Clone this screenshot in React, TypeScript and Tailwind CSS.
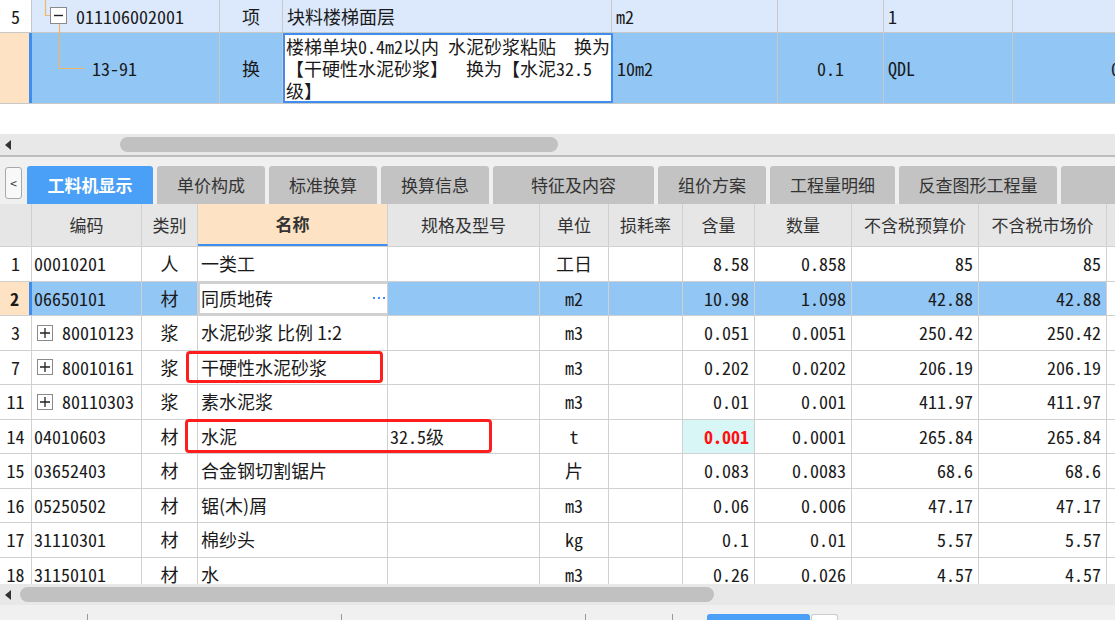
import React from "react";

const mono = "font-['Noto_Sans_Mono_CJK_SC','Noto_Sans_CJK_SC',monospace]";
const sans = "font-['Noto_Sans_CJK_SC','Noto_Sans',sans-serif]";

type Item = {
  no: string;
  code: string;
  plus?: boolean;
  kind: string;
  name: string;
  spec: string;
  unit: string;
  qty: string;
  amount: string;
  budget: string;
  market: string;
};

const rows: Item[] = [
  { no: "1", code: "00010201", kind: "人", name: "一类工", spec: "", unit: "工日", qty: "8.58", amount: "0.858", budget: "85", market: "85" },
  { no: "2", code: "06650101", kind: "材", name: "同质地砖", spec: "", unit: "m2", qty: "10.98", amount: "1.098", budget: "42.88", market: "42.88" },
  { no: "3", code: "80010123", plus: true, kind: "浆", name: "水泥砂浆 比例 1:2", spec: "", unit: "m3", qty: "0.051", amount: "0.0051", budget: "250.42", market: "250.42" },
  { no: "7", code: "80010161", plus: true, kind: "浆", name: "干硬性水泥砂浆", spec: "", unit: "m3", qty: "0.202", amount: "0.0202", budget: "206.19", market: "206.19" },
  { no: "11", code: "80110303", plus: true, kind: "浆", name: "素水泥浆", spec: "", unit: "m3", qty: "0.01", amount: "0.001", budget: "411.97", market: "411.97" },
  { no: "14", code: "04010603", kind: "材", name: "水泥", spec: "32.5级", unit: "t", qty: "0.001", amount: "0.0001", budget: "265.84", market: "265.84" },
  { no: "15", code: "03652403", kind: "材", name: "合金钢切割锯片", spec: "", unit: "片", qty: "0.083", amount: "0.0083", budget: "68.6", market: "68.6" },
  { no: "16", code: "05250502", kind: "材", name: "锯(木)屑", spec: "", unit: "m3", qty: "0.06", amount: "0.006", budget: "47.17", market: "47.17" },
  { no: "17", code: "31110301", kind: "材", name: "棉纱头", spec: "", unit: "kg", qty: "0.1", amount: "0.01", budget: "5.57", market: "5.57" },
  { no: "18", code: "31150101", kind: "材", name: "水", spec: "", unit: "m3", qty: "0.26", amount: "0.026", budget: "4.57", market: "4.57" },
];

const tabs = [
  { label: "工料机显示", w: "w-[126px]", active: true },
  { label: "单价构成", w: "w-[108px]" },
  { label: "标准换算", w: "w-[108px]" },
  { label: "换算信息", w: "w-[108px]" },
  { label: "特征及内容", w: "w-[161px]" },
  { label: "组价方案", w: "w-[108px]" },
  { label: "工程量明细", w: "w-[125px]" },
  { label: "反查图形工程量", w: "w-[158px]" },
  { label: "", w: "w-[60px]" },
];

const line = "border-[#d0d0d0]";

function TopGrid() {
  return (
    <div className={`relative h-[104px] ${mono} text-[18px] text-[#1a1a1a]`}>
      <div className="flex h-[33px] bg-[#dce9fc] border-b border-[#c8c8c8]">
        <div className="w-[32px] shrink-0 bg-white border-r border-[#c8c8c8] flex items-center justify-center">5</div>
        <div className="w-[188px] shrink-0 border-r border-[#c8c8c8] flex items-center pl-[44px]">011106002001</div>
        <div className={`w-[63px] shrink-0 border-r border-[#c8c8c8] flex items-center justify-center ${sans}`}>项</div>
        <div className={`w-[329px] shrink-0 border-r border-[#c8c8c8] flex items-center pl-[4px] ${sans}`}>块料楼梯面层</div>
        <div className="w-[166px] shrink-0 border-r border-[#c8c8c8] flex items-center pl-[4px]">m2</div>
        <div className="w-[106px] shrink-0 border-r border-[#c8c8c8]"></div>
        <div className="w-[129px] shrink-0 border-r border-[#c8c8c8] flex items-center pl-[4px]">1</div>
        <div className="flex-1"></div>
      </div>
      <div className="flex h-[71px] bg-[#92c6f5] border-b border-[#c8c8c8]">
        <div className="w-[32px] shrink-0 bg-[#fde3c3] border-r-[3px] border-[#3d8ef0]"></div>
        <div className="w-[188px] shrink-0 border-r border-[#c8c8c8] flex items-center pl-[60px]">13-91</div>
        <div className="w-[63px] shrink-0 border-r border-[#c8c8c8] flex items-center justify-center">换</div>
        <div className="w-[330px] shrink-0 bg-white border-2 border-[#3d8ef0] px-[1px] leading-[22px] whitespace-pre overflow-hidden">
          {"楼梯单块0.4m2以内 水泥砂浆粘贴  换为\n【干硬性水泥砂浆】  换为【水泥32.5\n级】"}
        </div>
        <div className="w-[165px] shrink-0 border-r border-[#c8c8c8] flex items-center pl-[4px]">10m2</div>
        <div className="w-[106px] shrink-0 border-r border-[#c8c8c8] flex items-center justify-center">0.1</div>
        <div className="w-[129px] shrink-0 border-r border-[#c8c8c8] flex items-center pl-[4px]">QDL</div>
        <div className="flex-1 flex items-center pl-[98px] overflow-hidden">0</div>
      </div>
      <svg className="absolute left-0 top-0" width="100" height="104">
        <path d="M45.5 0 V15.5 H50" stroke="#eeb868" strokeWidth="1.2" fill="none" />
        <path d="M59.5 24 V68.5 H84" stroke="#eeb868" strokeWidth="1.2" fill="none" />
        <rect x="50.5" y="7.5" width="16" height="16" fill="#fff" stroke="#8a8a8a" />
        <path d="M54 15.5 H63" stroke="#222" strokeWidth="1.4" />
      </svg>
    </div>
  );
}

function HScroll({ thumb }: { thumb: string }) {
  return (
    <div className="relative h-[21px] bg-[#e8e8e8] flex items-center">
      <svg className="absolute left-[5px]" width="6" height="10">
        <path d="M6 0 V10 L0 5 Z" fill="#333" />
      </svg>
      <div className={`h-[15px] rounded-full bg-[#c1c1c1] ${thumb}`}></div>
    </div>
  );
}

function Tabs() {
  return (
    <div className={`h-[49px] bg-[#f0f0f0] border-t-2 border-[#bdbdbd] flex items-end ${sans}`}>
      <div className="self-start mt-[10px] ml-[5px] w-[17px] h-[32px] rounded-[3px] border border-[#a8a8a8] bg-[#f8f8f8] flex items-center justify-center text-[12px] text-[#333]">&lt;</div>
      <div className="flex gap-[4px] ml-[5px] h-[38px] overflow-hidden">
        {tabs.map((t, i) => (
          <div
            key={i}
            className={`${t.w} shrink-0 rounded-t-[3px] flex items-center justify-center text-[17px] ${t.active ? "bg-[#4aa0f6] text-white font-bold" : "bg-[#c3c3c3] text-[#333]"}`}
          >
            {t.label}
          </div>
        ))}
      </div>
    </div>
  );
}

function Header() {
  const h = `border-r ${line} flex items-center justify-center shrink-0`;
  return (
    <div className={`flex h-[43px] bg-[#e6e6e6] border-b ${line} ${sans} text-[17px] text-[#333]`}>
      <div className={`${h} w-[32px]`}></div>
      <div className={`${h} w-[110px]`}>编码</div>
      <div className={`${h} w-[56px]`}>类别</div>
      <div className={`${h} w-[190px] bg-[#fde3c3] font-bold border-b-2 border-b-[#3d8ef0]`}>名称</div>
      <div className={`${h} w-[152px]`}>规格及型号</div>
      <div className={`${h} w-[69px]`}>单位</div>
      <div className={`${h} w-[74px]`}>损耗率</div>
      <div className={`${h} w-[72px]`}>含量</div>
      <div className={`${h} w-[97px]`}>数量</div>
      <div className={`${h} w-[127px]`}>不含税预算价</div>
      <div className={`${h} w-[128px]`}>不含税市场价</div>
      <div className="flex-1"></div>
    </div>
  );
}

function Row({ r }: { r: Item }) {
  const sel = r.no === "2";
  const red = r.no === "14";
  const c = `border-r ${line} flex items-center shrink-0`;
  return (
    <div className={`flex h-[34.5px] border-b ${line} ${sel ? "bg-[#92c6f5]" : "bg-white"}`}>
      <div className={`w-[32px] shrink-0 flex items-center justify-center ${sel ? "bg-[#fde3c3] font-bold border-r-[3px] border-[#3d8ef0]" : `border-r ${line}`}`}>{r.no}</div>
      <div className={`${c} w-[110px] pl-[2px]`}>
        {r.plus && (
          <span className="shrink-0 w-[16px] h-[16px] ml-[3px] mr-[9px] border border-[#8a8a8a] flex items-center justify-center">
            <svg width="10" height="10">
              <path d="M0 5 H10 M5 0 V10" stroke="#222" strokeWidth="1.3" />
            </svg>
          </span>
        )}
        {r.code}
      </div>
      <div className={`${c} w-[56px] justify-center ${sans}`}>{r.kind}</div>
      <div className={`${c} w-[190px] ${sel ? "bg-white border-2 border-[#5c5c5c]" : "pl-[3px]"} ${sans}`}>
        <span className={sel ? "pl-[1px]" : ""}>{r.name}</span>
        {sel && (
          <span className="ml-auto mr-[2px] flex gap-[3px]">
            <i className="w-[2px] h-[2px] bg-[#3d8ef0]"></i>
            <i className="w-[2px] h-[2px] bg-[#3d8ef0]"></i>
            <i className="w-[2px] h-[2px] bg-[#3d8ef0]"></i>
          </span>
        )}
      </div>
      <div className={`${c} w-[152px] pl-[2px]`}>{r.spec}</div>
      <div className={`${c} w-[69px] justify-center ${r.unit === "工日" || r.unit === "片" ? sans : ""}`}>{r.unit}</div>
      <div className={`${c} w-[74px]`}></div>
      <div className={`${c} w-[72px] justify-end pr-[5px] ${red ? "bg-[#d9f6f6] text-[#ff1010] font-bold" : ""}`}>{r.qty}</div>
      <div className={`${c} w-[97px] justify-end pr-[5px]`}>{r.amount}</div>
      <div className={`${c} w-[127px] justify-end pr-[5px]`}>{r.budget}</div>
      <div className={`${c} w-[128px] justify-end pr-[5px]`}>{r.market}</div>
      <div className="flex-1 bg-white"></div>
    </div>
  );
}

export default function App() {
  return (
    <div className="w-[1115px] h-[620px] overflow-hidden bg-white flex flex-col">
      <TopGrid />
      <div className="h-[30px] bg-white"></div>
      <HScroll thumb="ml-[120px] w-[438px]" />
      <Tabs />
      <Header />
      <div className={`relative h-[337px] overflow-hidden ${mono} text-[18px] text-[#1a1a1a]`}>
        {rows.map((r) => (
          <Row key={r.no} r={r} />
        ))}
        <div className="absolute left-[186px] top-[104px] w-[197px] h-[32px] rounded-[4px] border-[3px] border-[#ff1e1e]"></div>
        <div className="absolute left-[185px] top-[172px] w-[307px] h-[34px] rounded-[4px] border-[3px] border-[#ff1e1e]"></div>
      </div>
      <HScroll thumb="ml-[20px] w-[694px]" />
      <div className="relative flex-1 bg-[#f0f0f0] flex items-end">
        <div className="absolute left-[87px] bottom-0 w-px h-[6px] bg-[#999]"></div>
        <div className="absolute left-[341px] bottom-0 w-px h-[6px] bg-[#999]"></div>
        <div className="absolute left-[585px] bottom-0 w-px h-[6px] bg-[#999]"></div>
        <div className="absolute left-[672px] bottom-0 w-px h-[6px] bg-[#999]"></div>
        <div className="ml-[707px] w-[103px] h-[6px] rounded-t-[3px] bg-[#4aa0f6]"></div>
        <div className="ml-[1px] w-[27px] h-[6px] rounded-t-[3px] bg-white border border-b-0 border-[#ccc]"></div>
      </div>
    </div>
  );
}
